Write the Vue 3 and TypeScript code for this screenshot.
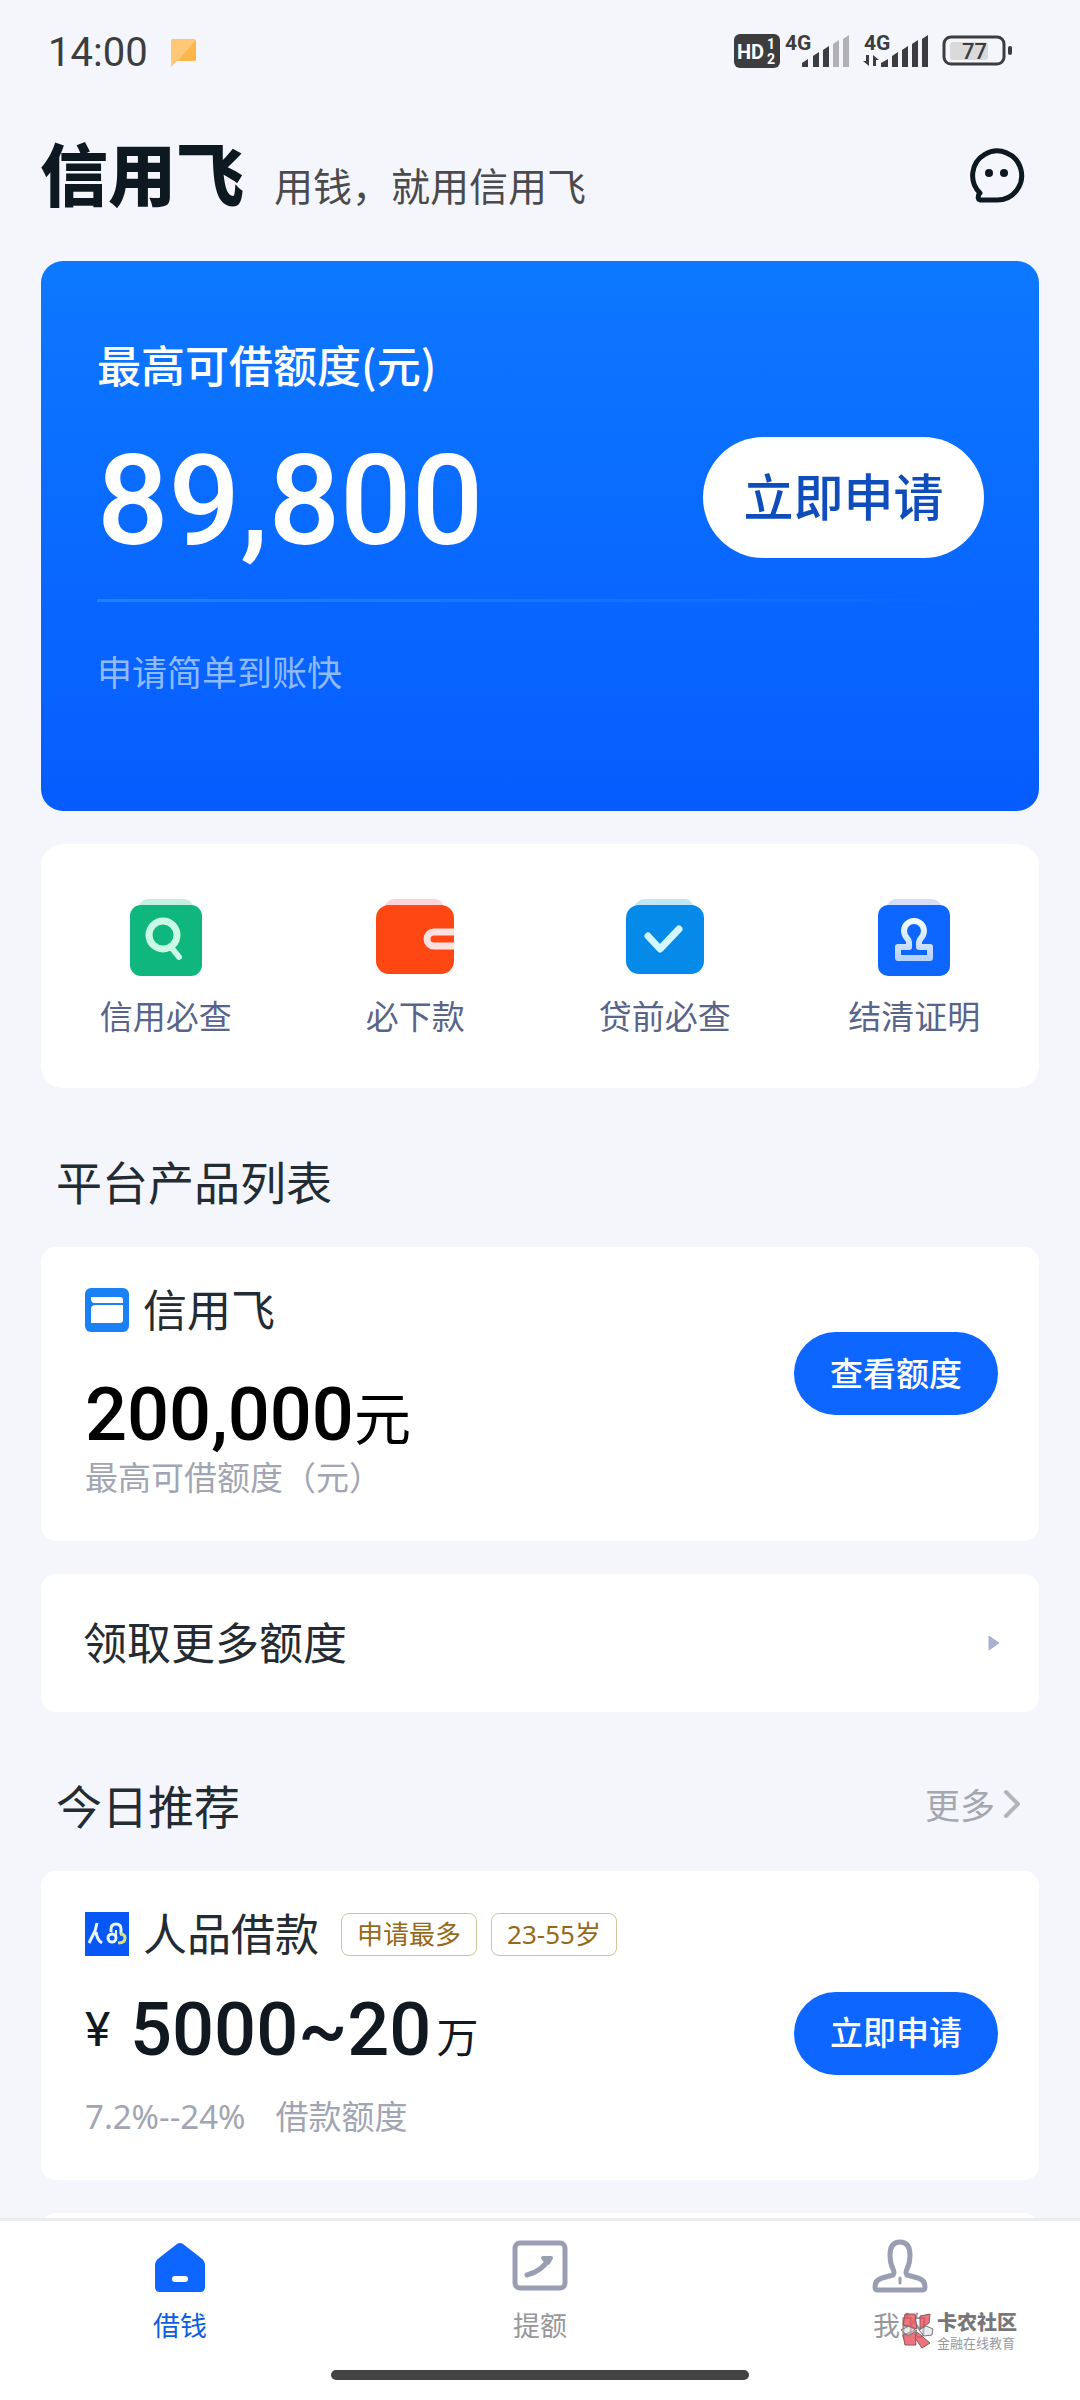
<script setup lang="ts">
interface Shortcut {
  id: string
  label: string
}

interface Tab {
  id: string
  label: string
  active: boolean
}

const shortcuts: Shortcut[] = [
  { id: 'credit', label: '信用必查' },
  { id: 'wallet', label: '必下款' },
  { id: 'check', label: '贷前必查' },
  { id: 'stamp', label: '结清证明' },
]

const tags: string[] = ['申请最多', '23-55岁']

const tabs: Tab[] = [
  { id: 'borrow', label: '借钱', active: true },
  { id: 'raise', label: '提额', active: false },
  { id: 'mine', label: '我的', active: false },
]
</script>

<template>
  <div class="app">
    <div class="status">
      <div class="status-left">
        <span class="clock">14:00</span>
        <svg width="28" height="30" viewBox="0 0 28 30" aria-hidden="true">
          <path d="M2 1h22a2 2 0 0 1 2 2v18a2 2 0 0 1-2 2H7l-6 6V2z" fill="#fec878" />
          <path d="M26 2v19a2 2 0 0 1-2 2H8L23 5z" fill="#fdb649" />
        </svg>
      </div>
      <svg class="status-right" width="280" height="38" viewBox="0 0 280 38" role="img" aria-label="信号与电量">
        <rect x="0" y="2" width="46" height="34" rx="6" fill="#3d3d3f" />
        <text x="3" y="27" font-size="20" font-weight="700" fill="#fff">HD</text>
        <text x="33" y="17" font-size="14" font-weight="700" fill="#fff">1</text>
        <text x="33" y="32" font-size="14" font-weight="700" fill="#fff">2</text>
        <g fill="#3d3d3f">
          <text x="51" y="18" font-size="21" font-weight="700">4G</text>
          <path d="M68 35v-4l6-4v8zM79 35V24l6-4v15zM89 35V18l6-4v21z" />
          <path d="M99 35V12l6-4v27zM109 35V7l6-4v32z" fill="#b1b1b3" />
          <text x="130" y="18" font-size="21" font-weight="700">4G</text>
          <path d="M135 23v11l-6-5h3v-6zM139 34V23l6 5h-3v6z" />
          <path d="M147 35v-4l7-4v8zM158 35V24l6-4v15zM168 35V18l6-4v21zM178 35V12l6-4v27zM188 35V7l6-4v32z" />
        </g>
        <rect x="210" y="5" width="60" height="27" rx="7" fill="none" stroke="#3d3d3f" stroke-width="3" />
        <rect x="216" y="10" width="38" height="18" rx="3" fill="#dadadb" />
        <rect x="274" y="14" width="4" height="9" rx="2" fill="#3d3d3f" />
        <text x="228" y="27" font-size="22" font-weight="500" fill="#3d3d3f">77</text>
      </svg>
    </div>

    <header class="header">
      <div class="brand">
        <h1 class="logo">信用飞</h1>
        <p class="slogan">用钱，就用信用飞</p>
      </div>
      <button class="chat" type="button" aria-label="客服">
        <svg width="56" height="58" viewBox="0 0 56 58" aria-hidden="true">
          <path
            d="M28 53H11q-3-1-1-6l1-1A24.500 24.500 0 1 1 28 53z"
            fill="none"
            stroke="#0d1820"
            stroke-width="5"
            stroke-linejoin="round"
          />
          <circle cx="20" cy="26" r="4" fill="#0d1820" />
          <circle cx="35" cy="26" r="4" fill="#0d1820" />
        </svg>
      </button>
    </header>

    <main class="content">
      <section class="hero">
        <p class="hero-title">最高可借额度(元)</p>
        <div class="hero-row">
          <strong class="hero-amount">89,800</strong>
          <button class="hero-btn" type="button">立即申请</button>
        </div>
        <div class="hero-line"></div>
        <p class="hero-note">申请简单到账快</p>
      </section>

      <nav class="shortcuts" aria-label="快捷入口">
        <a v-for="item in shortcuts" :key="item.id" class="shortcut" href="#">
          <svg v-if="item.id === 'credit'" width="80" height="80" viewBox="0 0 80 80" aria-hidden="true">
            <path d="M12 8q4-8 10-8h36q6 0 10 8z" fill="#c4f0df" />
            <rect x="4" y="6" width="72" height="71" rx="11" fill="#0fb67d" />
            <circle cx="37" cy="36" r="14" fill="none" stroke="#c9fae6" stroke-width="7" />
            <path d="M45 48l8 10" stroke="#c9fae6" stroke-width="6" stroke-linecap="round" />
          </svg>
          <svg v-else-if="item.id === 'wallet'" width="80" height="80" viewBox="0 0 80 80" aria-hidden="true">
            <path d="M9 8q4-8 11-8h40q6 0 9 8z" fill="#fbd3d8" />
            <rect x="1" y="6" width="78" height="69" rx="13" fill="#ff4713" />
            <path d="M79 33H59a7 7 0 0 0 0 14h20" fill="none" stroke="#fde0e0" stroke-width="7" />
          </svg>
          <svg v-else-if="item.id === 'check'" width="80" height="80" viewBox="0 0 80 80" aria-hidden="true">
            <path d="M9 8q4-8 11-8h40q6 0 9 8z" fill="#bfe8f6" />
            <rect x="1" y="6" width="78" height="69" rx="13" fill="#058aea" />
            <path d="M23 37l12 13 19-20" fill="none" stroke="#d3f6ff" stroke-width="7" stroke-linecap="round" stroke-linejoin="round" />
          </svg>
          <svg v-else width="80" height="80" viewBox="0 0 80 80" aria-hidden="true">
            <defs>
              <linearGradient id="stampFill" x1="0" y1="0" x2="0" y2="1">
                <stop offset="0" stop-color="#f2fbff" />
                <stop offset="1" stop-color="#b6d4fb" />
              </linearGradient>
            </defs>
            <path d="M12 8q4-8 10-8h36q6 0 10 8z" fill="#d5def8" />
            <rect x="4" y="6" width="72" height="71" rx="10" fill="#0d66ff" />
            <path
              d="M35 48v-5c0-3-5-5-5-11a10 10 0 0 1 20 0c0 6-5 8-5 11v5h11v11H24V48z"
              fill="none"
              stroke="url(#stampFill)"
              stroke-width="6"
              stroke-linejoin="round"
            />
          </svg>
          <span>{{ item.label }}</span>
        </a>
      </nav>

      <div class="section-head">
        <h2>平台产品列表</h2>
      </div>

      <article class="card product">
        <div class="product-info">
          <div class="product-name">
            <svg width="44" height="44" viewBox="0 0 44 44" aria-hidden="true">
              <rect width="44" height="44" rx="6" fill="#1a80f5" />
              <path d="M6 9h29q3 0 3 3v3H10q-4 0-4-4z" fill="#fff" />
              <path d="M6 35V21q0-4 5-4h27v15q0 3-3 3z" fill="#fff" />
            </svg>
            <h3>信用飞</h3>
          </div>
          <p class="product-amount black"><strong>200,000</strong><span class="unit-large">元</span></p>
          <p class="product-note">最高可借额度（元）</p>
        </div>
        <button class="product-btn raised" type="button">查看额度</button>
      </article>

      <a class="card more-quota" href="#">
        <span>领取更多额度</span>
        <svg width="12" height="16" viewBox="0 0 12 16" aria-hidden="true">
          <path d="M1 1v14l10-7z" fill="#a9b1d0" stroke="#a9b1d0" stroke-linejoin="round" />
        </svg>
      </a>

      <div class="section-head">
        <h2>今日推荐</h2>
        <a class="more" href="#">
          更多
          <svg width="18" height="30" viewBox="0 0 18 30" aria-hidden="true">
            <path d="M3 3l12 12L3 27" fill="none" stroke="#b4b5ba" stroke-width="4" stroke-linecap="round" stroke-linejoin="round" />
          </svg>
        </a>
      </div>

      <article class="card product spaced">
        <div class="product-info">
          <div class="product-name">
            <svg width="44" height="44" viewBox="0 0 44 44" aria-hidden="true">
              <rect width="44" height="44" fill="#0757f7" />
              <path d="M12 11l-2 8-6 12M11 20q1 8 6 11" fill="none" stroke="#e8f6ff" stroke-width="3" />
              <path d="M26 20v-3q0-5 5-5t5 5v5" fill="none" stroke="#e8f6ff" stroke-width="3" />
              <circle cx="27" cy="26" r="4" fill="none" stroke="#e8f6ff" stroke-width="3" />
              <path d="M31 18v11" fill="none" stroke="#e8f6ff" stroke-width="2" />
              <path d="M35 22q5 0 5 4 0 5-7 5" fill="none" stroke="#d9e27a" stroke-width="3" />
            </svg>
            <h3>人品借款</h3>
            <span v-for="tag in tags" :key="tag" class="tag">{{ tag }}</span>
          </div>
          <p class="product-amount">
            <span class="currency">¥</span><strong>5000~20</strong><span class="unit">万</span>
          </p>
          <p class="product-note"><span>7.2%--24%</span><span>借款额度</span></p>
        </div>
        <button class="product-btn lowered" type="button">立即申请</button>
      </article>

      <article class="card next-card"></article>
    </main>

    <footer class="tabbar">
      <nav class="tabs" aria-label="主导航">
        <a v-for="tab in tabs" :key="tab.id" class="tab" :class="{ active: tab.active }" href="#">
          <svg v-if="tab.id === 'borrow'" width="56" height="56" viewBox="0 0 56 56" aria-hidden="true">
            <path d="M7 19L25 5q3-2 6 0l18 14q4 3 4 7v22q0 5-5 5H8q-5 0-5-5V26q0-4 4-7z" fill="#0d66ff" />
            <rect x="20" y="37" width="16" height="6" rx="3" fill="#fff" />
          </svg>
          <svg v-else-if="tab.id === 'raise'" width="56" height="56" viewBox="0 0 56 56" aria-hidden="true">
            <rect x="3" y="4" width="50" height="45" rx="5" fill="none" stroke="#999eb3" stroke-width="5" />
            <path d="M15 36q15-4 21-15" fill="none" stroke="#999eb3" stroke-width="5" stroke-linecap="round" />
            <path d="M31 19h8l-3 5z" fill="#999eb3" stroke="#999eb3" stroke-width="4" stroke-linejoin="round" />
          </svg>
          <svg v-else width="56" height="56" viewBox="0 0 56 56" aria-hidden="true">
            <path
              d="M21 36q2-2 0-6c-2-4-3-9-3-14 0-8 3-13 10-13s10 5 10 13c0 5-1 10-3 14q-2 4 0 6l11 3q7 2 7 9c0 2-1 3-3 3H6c-2 0-3-1-3-3q0-7 7-9z"
              fill="none"
              stroke="#999eb3"
              stroke-width="5"
              stroke-linejoin="round"
            />
            <path d="M28 39v5" stroke="#999eb3" stroke-width="3" stroke-linecap="round" />
          </svg>
          <span>{{ tab.label }}</span>
        </a>
      </nav>
      <div class="home-bar"></div>
      <div class="watermark">
        <svg width="34" height="36" viewBox="0 0 34 36" aria-hidden="true">
          <g fill="#e8505b" fill-opacity="0.8" stroke="#8a5a5e" stroke-width="1">
            <path d="M5 1h10l2 15L3 12z" />
            <path d="M20 3l10-2-1 9-9 6z" />
            <path d="M3 22l12-5 1 15H5z" />
            <path d="M17 19l13 11-8 5-7-10z" />
          </g>
          <path d="M1 17l8-4 8 5-9 5zM19 17l7-4 7 3-1 6-8 1z" fill="#d8d8da" fill-opacity="0.500" stroke="#77777a" />
        </svg>
        <div class="watermark-text">
          <b>卡农社区</b>
          <small>金融在线教育</small>
        </div>
      </div>
    </footer>
  </div>
</template>

<style>
body {
  margin: 0;
  background: #f4f6fb;
}
</style>

<style scoped>
.app {
  display: flex;
  flex-direction: column;
  height: 100vh;
  overflow: hidden;
  background: #f4f6fb;
  color: #232b33;
  font-family: "Noto Sans CJK SC", sans-serif;
}

h1,
h2,
h3,
p {
  margin: 0;
  font-weight: 400;
}

a {
  color: inherit;
  text-decoration: none;
}

button {
  border: 0;
  padding: 0;
  font-family: inherit;
}

svg {
  display: block;
  flex: none;
}

svg text {
  font-family: Roboto, sans-serif;
}

.status {
  display: flex;
  flex: none;
  align-items: center;
  justify-content: space-between;
  height: 102px;
  padding: 0 66px 0 48px;
}

.status-left {
  display: flex;
  align-items: center;
  gap: 22px;
  padding-top: 3px;
}

.clock {
  color: #3d3d3f;
  font-family: Roboto, sans-serif;
  font-size: 40px;
  line-height: 48px;
}

.header {
  display: flex;
  flex: none;
  align-items: center;
  justify-content: space-between;
  height: 147px;
  padding: 0 55px 12px 40px;
}

.brand {
  display: flex;
  align-items: baseline;
  gap: 30px;
  padding-bottom: 8px;
}

.logo {
  color: #0d1820;
  font-size: 68px;
  font-weight: 900;
  line-height: 80px;
}

.slogan {
  color: #4b4b4d;
  font-size: 39px;
  line-height: 48px;
}

.chat {
  background: none;
}

.content {
  flex: 1;
  min-height: 0;
  padding: 0 41px;
  overflow: hidden;
}

.hero {
  padding: 73px 55px 115px 56px;
  border-radius: 22px;
  background: linear-gradient(#0d78ff, #065cff);
  color: #fff;
}

.hero-title {
  font-size: 44px;
  font-weight: 500;
  line-height: 60px;
}

.hero-row {
  display: flex;
  align-items: center;
  justify-content: space-between;
  height: 121px;
  margin: 43px 0 41px;
}

.hero-amount {
  padding-top: 6px;
  font-family: Roboto, sans-serif;
  font-size: 126px;
  font-weight: 500;
  line-height: 120px;
}

.hero-btn {
  width: 281px;
  height: 121px;
  padding-bottom: 8px;
  border-radius: 61px;
  background: #fff;
  color: #0f4dbb;
  font-size: 50px;
  font-weight: 500;
}

.hero-line {
  height: 3px;
  background: linear-gradient(90deg, #2580ff, rgba(37, 128, 255, 0));
}

.hero-note {
  margin-top: 44px;
  color: #8fbaff;
  font-size: 35px;
  line-height: 50px;
}

.shortcuts {
  display: grid;
  grid-template-columns: repeat(4, 1fr);
  margin-top: 33px;
  padding: 55px 0 52px;
  border-radius: 22px;
  background: #fff;
}

.shortcut {
  display: flex;
  flex-direction: column;
  align-items: center;
  gap: 16px;
  color: #58648a;
  font-size: 33px;
  line-height: 41px;
}

.section-head {
  display: flex;
  align-items: center;
  justify-content: space-between;
  padding: 62px 18px 37px 15px;
}

.section-head h2 {
  font-size: 46px;
  line-height: 60px;
}

.more {
  display: flex;
  align-items: center;
  gap: 8px;
  color: #a5a8b1;
  font-size: 35px;
  line-height: 48px;
}

.card {
  border-radius: 15px;
  background: #fff;
}

.product {
  display: flex;
  align-items: center;
  justify-content: space-between;
  padding: 36px 41px 41px 44px;
}

.product-name {
  display: flex;
  align-items: center;
  gap: 14px;
  height: 54px;
}

.product-name h3 {
  padding-bottom: 4px;
  font-size: 44px;
  line-height: 54px;
}

.product-amount {
  display: flex;
  align-items: center;
  height: 80px;
  margin: 38px 0 1px;
  color: #111820;
  line-height: 80px;
}

.spaced .product-amount {
  margin: 29px 0 25px;
}

.product-amount.black {
  color: #000;
}

.product-amount strong {
  font-family: Roboto, sans-serif;
  font-size: 74px;
  font-weight: 500;
}

.currency {
  width: 45px;
  font-family: Roboto, sans-serif;
  font-size: 48px;
}

.unit-large {
  font-size: 57px;
}

.unit {
  margin-left: 5px;
  padding-top: 10px;
  font-size: 42px;
}

.product-note {
  display: flex;
  gap: 30px;
  color: #a2a5b3;
  font-family: "Noto Sans", "Noto Sans CJK SC", sans-serif;
  font-size: 33px;
  line-height: 44px;
}

.product-btn {
  width: 204px;
  height: 83px;
  padding-bottom: 4px;
  border-radius: 42px;
  background: #0d66ff;
  color: #fff;
  font-size: 33px;
  font-weight: 500;
}

.raised {
  margin-bottom: 36px;
}

.lowered {
  margin-top: 20px;
}

.tag {
  height: 41px;
  padding: 0 15px;
  border: 1px solid #cfc49c;
  border-radius: 8px;
  color: #96691a;
  font-family: "Noto Sans", "Noto Sans CJK SC", sans-serif;
  font-size: 26px;
  line-height: 41px;
}

.tag:first-of-type {
  margin-left: 8px;
}

.more-quota {
  display: flex;
  align-items: center;
  justify-content: space-between;
  height: 138px;
  margin-top: 33px;
  padding: 0 39px 0 42px;
  font-size: 44px;
  line-height: 60px;
}

.more-quota span {
  padding-bottom: 4px;
}

.next-card {
  height: 308px;
  margin-top: 33px;
}

.tabbar {
  position: relative;
  flex: none;
  border-top: 3px solid #ececef;
  background: #fff;
}

.tabs {
  display: grid;
  grid-template-columns: repeat(3, 1fr);
  padding-top: 18px;
}

.tab {
  display: flex;
  flex-direction: column;
  align-items: center;
  gap: 12px;
  color: #97979c;
  font-size: 27px;
  line-height: 36px;
}

.tab.active {
  color: #0d5fe0;
}

.home-bar {
  width: 418px;
  height: 10px;
  margin: 27px auto 20px;
  border-radius: 5px;
  background: #444;
}

.watermark {
  position: absolute;
  top: 91px;
  right: 63px;
  display: flex;
  align-items: center;
  gap: 3px;
}

.watermark-text {
  display: flex;
  flex-direction: column;
  gap: 4px;
}

.watermark b {
  color: #77777a;
  font-size: 20px;
  font-weight: 900;
  line-height: 20px;
}

.watermark small {
  color: #99999c;
  font-size: 13px;
  line-height: 13px;
}
</style>
